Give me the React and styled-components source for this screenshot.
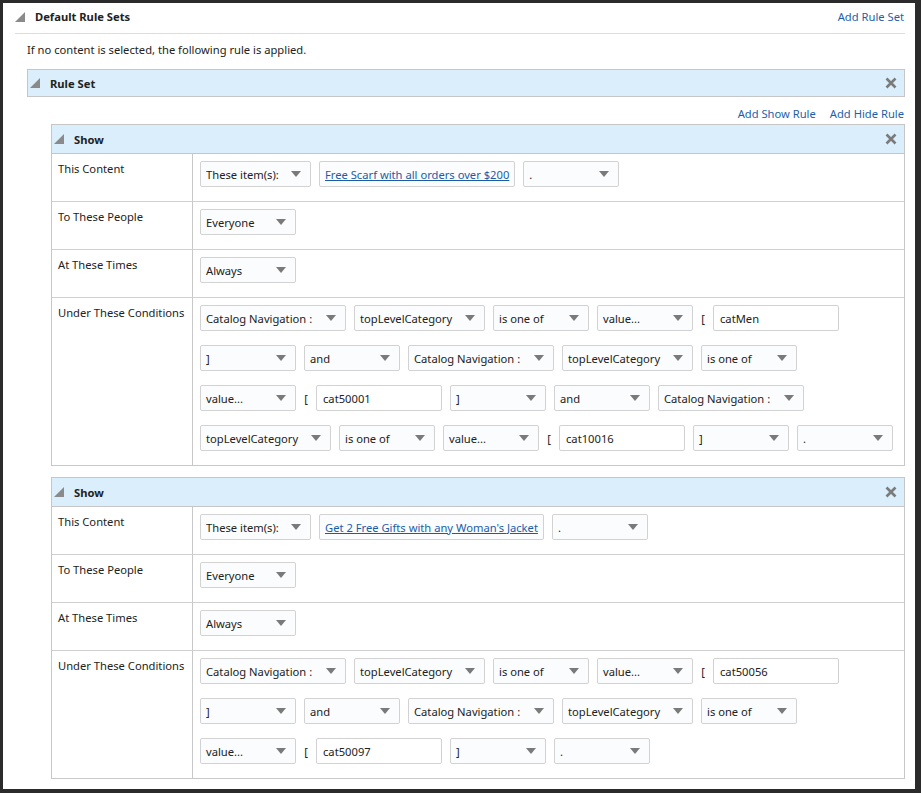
import React from 'react';
import styled, { createGlobalStyle } from 'styled-components';


const GlobalStyle = createGlobalStyle`
  html, body {
    margin: 0;
    padding: 0;
    background: #2b2b2b;
  }

  body {
    font-family: "Noto Sans", "Open Sans", sans-serif;
    font-size: 11.2px;
    color: #222;
  }
`;


const rules = [
  {
    title: 'Free Scarf with all orders over $200',
    conditions: [
      { kind: 'select', label: 'Catalog Navigation :', width: 146 },
      { kind: 'select', label: 'topLevelCategory', width: 131 },
      { kind: 'select', label: 'is one of', width: 96 },
      { kind: 'select', label: 'value...', width: 96 },
      { kind: 'bracket', label: '[' },
      { kind: 'input', label: 'catMen' },
      { kind: 'select', label: ']', width: 96 },
      { kind: 'select', label: 'and', width: 96 },
      { kind: 'select', label: 'Catalog Navigation :', width: 146 },
      { kind: 'select', label: 'topLevelCategory', width: 131 },
      { kind: 'select', label: 'is one of', width: 96 },
      { kind: 'select', label: 'value...', width: 96 },
      { kind: 'bracket', label: '[' },
      { kind: 'input', label: 'cat50001' },
      { kind: 'select', label: ']', width: 96 },
      { kind: 'select', label: 'and', width: 96 },
      { kind: 'select', label: 'Catalog Navigation :', width: 146 },
      { kind: 'select', label: 'topLevelCategory', width: 131 },
      { kind: 'select', label: 'is one of', width: 96 },
      { kind: 'select', label: 'value...', width: 96 },
      { kind: 'bracket', label: '[' },
      { kind: 'input', label: 'cat10016' },
      { kind: 'select', label: ']', width: 96 },
      { kind: 'select', label: '.', width: 96 },
    ],
  },
  {
    title: "Get 2 Free Gifts with any Woman's Jacket",
    conditions: [
      { kind: 'select', label: 'Catalog Navigation :', width: 146 },
      { kind: 'select', label: 'topLevelCategory', width: 131 },
      { kind: 'select', label: 'is one of', width: 96 },
      { kind: 'select', label: 'value...', width: 96 },
      { kind: 'bracket', label: '[' },
      { kind: 'input', label: 'cat50056' },
      { kind: 'select', label: ']', width: 96 },
      { kind: 'select', label: 'and', width: 96 },
      { kind: 'select', label: 'Catalog Navigation :', width: 146 },
      { kind: 'select', label: 'topLevelCategory', width: 131 },
      { kind: 'select', label: 'is one of', width: 96 },
      { kind: 'select', label: 'value...', width: 96 },
      { kind: 'bracket', label: '[' },
      { kind: 'input', label: 'cat50097' },
      { kind: 'select', label: ']', width: 96 },
      { kind: 'select', label: '.', width: 96 },
    ],
  },
];


const Corner = () => (
  <svg width="10" height="10" viewBox="0 0 10 10">
    <polygon points="10,0 10,10 0,10" fill="#8a8a8a" />
  </svg>
);

const CloseIcon = () => (
  <svg width="12" height="12" viewBox="0 0 12 12">
    <path d="M1.5 1.5 L10.5 10.5 M10.5 1.5 L1.5 10.5" stroke="#7b7b7b" strokeWidth="2.6" />
  </svg>
);


const Frame = styled.div`
  box-sizing: border-box;
  width: 912px;
  height: 786px;
  margin: 3px;
  padding: 0 10px 0 12px;
  background: #fff;
  overflow: hidden;
`;

const TopBar = styled.div`
  box-sizing: border-box;
  display: flex;
  align-items: center;
  justify-content: space-between;
  height: 31px;
  padding: 0 1px 3px 0;
  border-bottom: 1px solid #dedede;
`;

const Title = styled.div`
  display: flex;
  align-items: center;
  gap: 10px;
  font-weight: bold;
  color: #222;
`;

const Link = styled.a`
  color: #1e5fa8;
  text-decoration: none;
  cursor: pointer;
`;

const Note = styled.p`
  margin: 8px 0 11px 12px;
  line-height: 16px;
`;

const RuleSet = styled.div`
  margin-left: 12px;
`;

const PanelHeader = styled.div`
  box-sizing: border-box;
  display: flex;
  align-items: center;
  justify-content: space-between;
  height: ${(p) => p.$height}px;
  padding: 0 7px 0 2px;
  background: #daeefc;
  border: 1px solid #c6c6c6;
  font-weight: bold;
`;

const Actions = styled.div`
  box-sizing: border-box;
  display: flex;
  justify-content: flex-end;
  align-items: center;
  gap: 14px;
  height: 27px;
  padding: 5px 1px 0 0;
`;

const ShowBlock = styled.div`
  margin-left: 24px;
  margin-bottom: 11px;
`;

const Table = styled.div`
  border: 1px solid #c8c8c8;
  border-top: none;
`;

const Row = styled.div`
  display: grid;
  grid-template-columns: 141px 1fr;

  & + & {
    border-top: 1px solid #d0d0d0;
  }
`;

const Label = styled.div`
  padding: 7px 6px;
  border-right: 1px solid #c8c8c8;
  line-height: 16px;
  white-space: nowrap;
  color: #222;
`;

const Cell = styled.div`
  display: flex;
  flex-wrap: wrap;
  align-items: center;
  gap: 14px 8px;
  padding: 7px 7px 14px 7px;
`;

const SelectBox = styled.div`
  box-sizing: border-box;
  display: flex;
  align-items: center;
  justify-content: space-between;
  width: ${(p) => p.$width}px;
  height: 26px;
  padding: 0 9px 0 5px;
  background: #fbfcfd;
  border: 1px solid #d2d2d2;
  border-radius: 2px;
  white-space: nowrap;
`;

const Arrow = styled.span`
  width: 0;
  height: 0;
  border-left: 5px solid transparent;
  border-right: 5px solid transparent;
  border-top: 6px solid #7a7a7a;
`;

const LinkBox = styled.div`
  box-sizing: border-box;
  display: flex;
  align-items: center;
  height: 26px;
  padding: 0 5px;
  background: #fbfcfd;
  border: 1px solid #d2d2d2;
  border-radius: 2px;

  a {
    color: #1a5ca8;
    text-decoration: underline;
  }
`;

const TextBox = styled.div`
  box-sizing: border-box;
  display: flex;
  align-items: center;
  width: 126px;
  height: 26px;
  padding: 0 6px;
  background: #fff;
  border: 1px solid #d2d2d2;
  border-radius: 2px;
`;

const Bracket = styled.span`
  width: 4px;
  text-align: center;
`;


const Select = ({ label, width }) => (
  <SelectBox $width={width}>
    <span>{label}</span>
    <Arrow />
  </SelectBox>
);

const Control = ({ item }) => {
  if (item.kind === 'bracket') return <Bracket>{item.label}</Bracket>;
  if (item.kind === 'input') return <TextBox>{item.label}</TextBox>;
  return <Select label={item.label} width={item.width} />;
};

const ShowRule = ({ rule }) => (
  <ShowBlock>
    <PanelHeader $height={30}>
      <Title>
        <Corner />
        <span>Show</span>
      </Title>
      <CloseIcon />
    </PanelHeader>
    <Table>
      <Row>
        <Label>This Content</Label>
        <Cell>
          <Select label="These item(s):" width={111} />
          <LinkBox><a>{rule.title}</a></LinkBox>
          <Select label="." width={96} />
        </Cell>
      </Row>
      <Row>
        <Label>To These People</Label>
        <Cell>
          <Select label="Everyone" width={96} />
        </Cell>
      </Row>
      <Row>
        <Label>At These Times</Label>
        <Cell>
          <Select label="Always" width={96} />
        </Cell>
      </Row>
      <Row>
        <Label>Under These Conditions</Label>
        <Cell>
          {rule.conditions.map((item, i) => (
            <Control item={item} key={i} />
          ))}
        </Cell>
      </Row>
    </Table>
  </ShowBlock>
);


const App = () => (
  <>
    <GlobalStyle />
    <Frame>
      <TopBar>
        <Title>
          <Corner />
          <span>Default Rule Sets</span>
        </Title>
        <Link>Add Rule Set</Link>
      </TopBar>
      <Note>If no content is selected, the following rule is applied.</Note>
      <RuleSet>
        <PanelHeader $height={28}>
          <Title>
            <Corner />
            <span>Rule Set</span>
          </Title>
          <CloseIcon />
        </PanelHeader>
        <Actions>
          <Link>Add Show Rule</Link>
          <Link>Add Hide Rule</Link>
        </Actions>
        {rules.map((rule, i) => (
          <ShowRule rule={rule} key={i} />
        ))}
      </RuleSet>
    </Frame>
  </>
);


export default App;
